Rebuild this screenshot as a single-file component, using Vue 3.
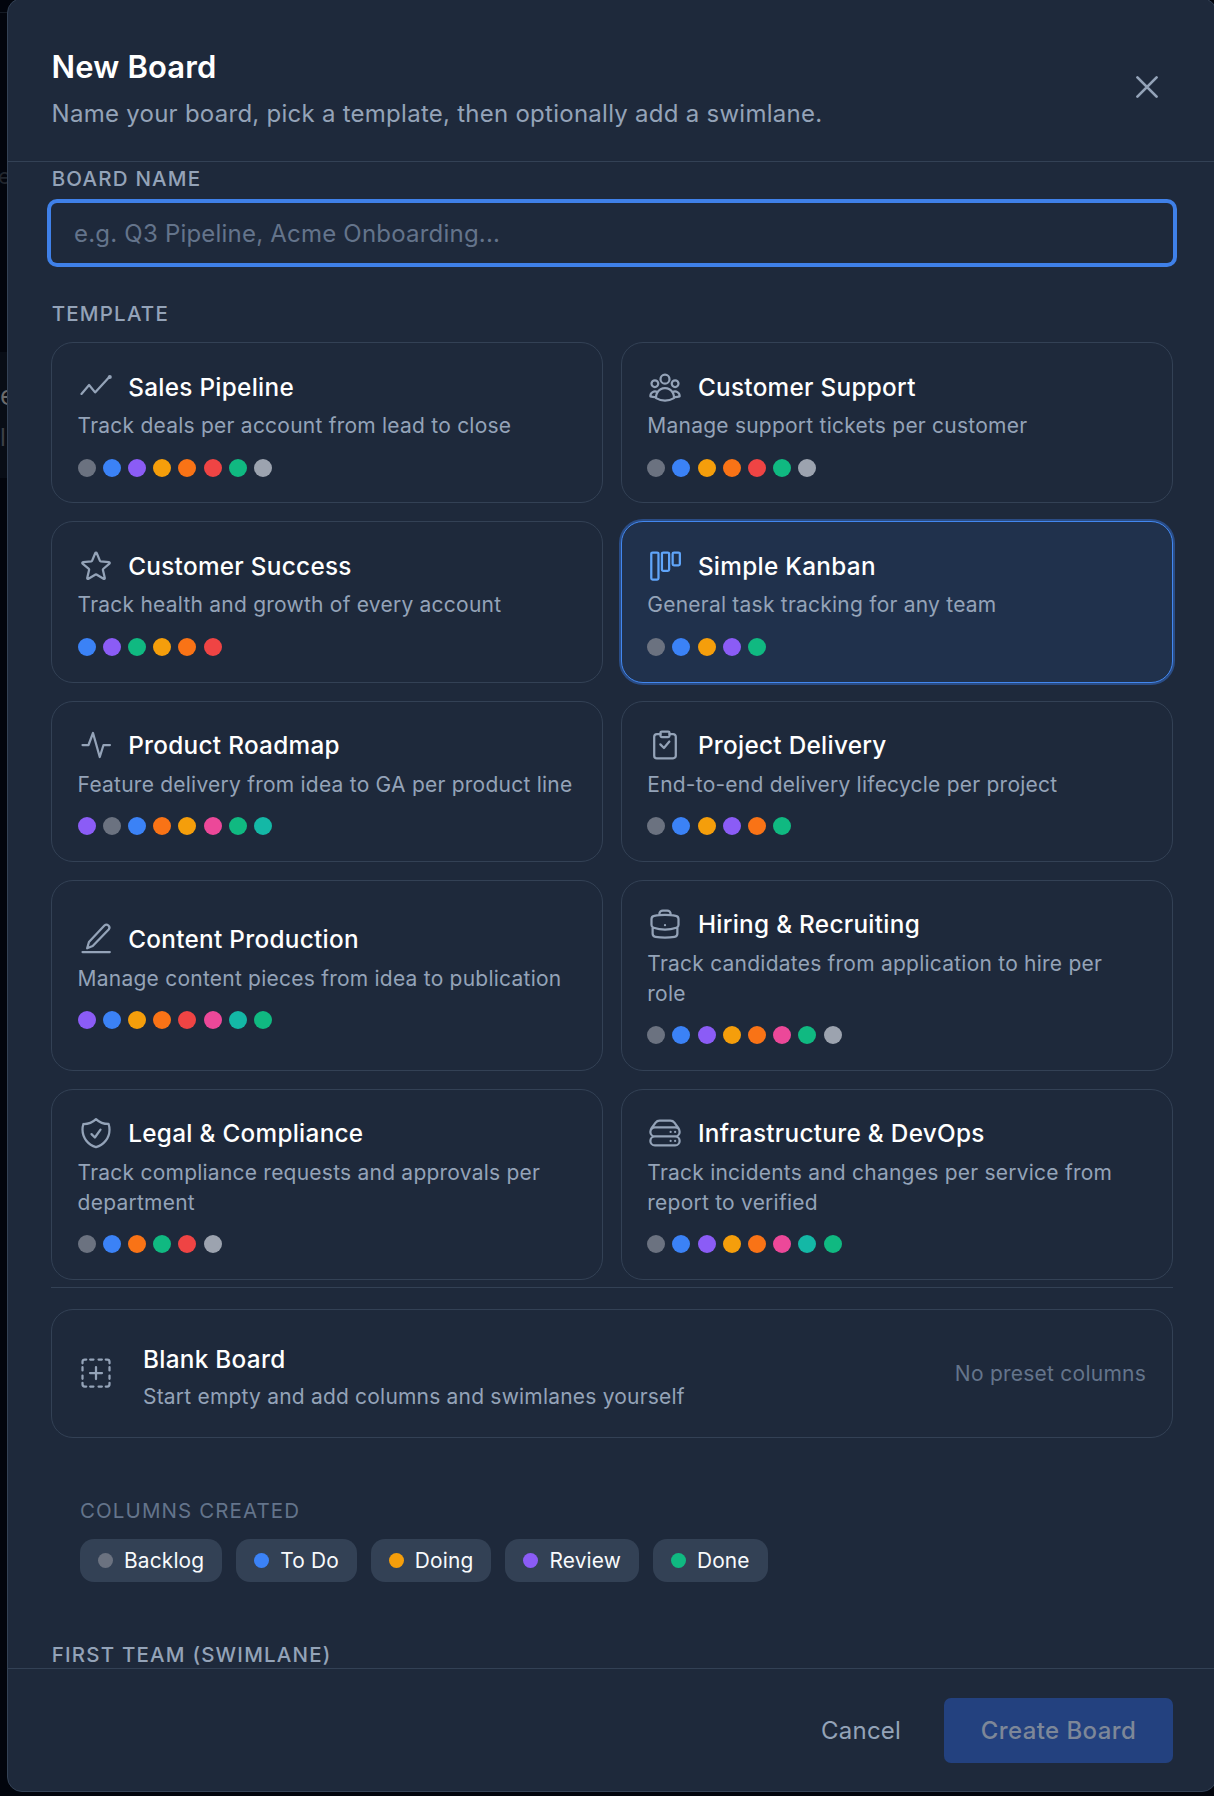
<script setup>
import { ref } from 'vue'

const colors = {
  gray: '#6b7280',
  blue: '#3b82f6',
  violet: '#8b5cf6',
  amber: '#f59e0b',
  orange: '#f97316',
  red: '#ef4444',
  green: '#10b981',
  silver: '#9ca3af',
  pink: '#ec4899',
  teal: '#14b8a6',
}

const icons = {
  trend: ['M2.3 16.6 7.4 10.7l4 4.9L21 5.2', 'M20.6 5.3a.6.6 0 1 0 1.2 0 .6.6 0 1 0-1.2 0Z'],
  group: [
    'M18 18.72a9.094 9.094 0 0 0 3.741-.479 3 3 0 0 0-4.682-2.72m.94 3.198.001.031c0 .225-.012.447-.037.666A11.944 11.944 0 0 1 12 21c-2.17 0-4.207-.576-5.963-1.584A6.062 6.062 0 0 1 6 18.719m12 0a5.971 5.971 0 0 0-.941-3.197m0 0A5.995 5.995 0 0 0 12 12.75a5.995 5.995 0 0 0-5.058 2.772m0 0a3 3 0 0 0-4.681 2.72 8.986 8.986 0 0 0 3.74.477m.94-3.197a5.971 5.971 0 0 0-.94 3.197M15 6.75a3 3 0 1 1-6 0 3 3 0 0 1 6 0Zm6 3a2.25 2.25 0 1 1-4.5 0 2.25 2.25 0 0 1 4.5 0Zm-13.5 0a2.25 2.25 0 1 1-4.5 0 2.25 2.25 0 0 1 4.5 0Z',
  ],
  star: [
    'M11.48 3.499a.562.562 0 0 1 1.04 0l2.125 5.111a.563.563 0 0 0 .475.345l5.518.442c.499.04.701.663.321.988l-4.204 3.602a.563.563 0 0 0-.182.557l1.285 5.385a.562.562 0 0 1-.84.61l-4.725-2.885a.562.562 0 0 0-.586 0L6.982 20.54a.562.562 0 0 1-.84-.61l1.285-5.386a.562.562 0 0 0-.182-.557l-4.204-3.602a.562.562 0 0 1 .321-.988l5.518-.442a.563.563 0 0 0 .475-.345L11.48 3.5Z',
  ],
  kanban: [
    'M3.75 3h3a.9.9 0 0 1 .9.9v16.2a.9.9 0 0 1-.9.9h-3a.9.9 0 0 1-.9-.9V3.9a.9.9 0 0 1 .9-.9Z',
    'M10.85 3h3a.9.9 0 0 1 .9.9v10.4a.9.9 0 0 1-.9.9h-3a.9.9 0 0 1-.9-.9V3.9a.9.9 0 0 1 .9-.9Z',
    'M18 3h3a.9.9 0 0 1 .9.9v6.8a.9.9 0 0 1-.9.9h-3a.9.9 0 0 1-.9-.9V3.9a.9.9 0 0 1 .9-.9Z',
  ],
  pulse: ['M3 12h4l3-8 4.5 16L17 12h4.3'],
  clipboard: [
    'M9 4.7H6.6a1.8 1.8 0 0 0-1.8 1.8v12.6a1.8 1.8 0 0 0 1.8 1.8h10.8a1.8 1.8 0 0 0 1.8-1.8V6.5a1.8 1.8 0 0 0-1.8-1.8H15',
    'M9.9 3h4.2a.9.9 0 0 1 .9.9v1.9a.9.9 0 0 1-.9.9H9.9a.9.9 0 0 1-.9-.9V3.9a.9.9 0 0 1 .9-.9Z',
    'M8.9 11.6 11.3 14l3.6-4.3',
  ],
  pencil: ['M6.1 18.2 7.3 14 17.6 3a1.95 1.95 0 0 1 2.85 2.65L9.8 16.7Z', 'M3 20.7h18.2'],
  briefcase: [
    'M20.25 14.15v4.25c0 1.094-.787 2.036-1.872 2.18-2.087.277-4.216.42-6.378.42s-4.291-.143-6.378-.42c-1.085-.144-1.872-1.086-1.872-2.18v-4.25m16.5 0a2.18 2.18 0 0 0 .75-1.661V8.706c0-1.081-.768-2.015-1.837-2.175a48.114 48.114 0 0 0-3.413-.387m4.5 8.006c-.194.165-.42.295-.673.38A23.978 23.978 0 0 1 12 15.75c-2.648 0-5.195-.429-7.577-1.22a2.016 2.016 0 0 1-.673-.38m0 0A2.18 2.18 0 0 1 3 12.489V8.706c0-1.081.768-2.015 1.837-2.175a48.111 48.111 0 0 1 3.413-.387m7.5 0V5.25A2.25 2.25 0 0 0 13.5 3h-3a2.25 2.25 0 0 0-2.25 2.25v.894m7.5 0a48.667 48.667 0 0 0-7.5 0M12 12.75h.008v.008H12v-.008Z',
  ],
  shield: [
    'M9 12.75 11.25 15 15 9.75m-3-7.036A11.959 11.959 0 0 1 3.598 6 11.99 11.99 0 0 0 3 9.749c0 5.592 3.824 10.29 9 11.623 5.176-1.332 9-6.03 9-11.622 0-1.31-.21-2.571-.598-3.751h-.152c-3.196 0-6.1-1.248-8.25-3.285Z',
  ],
  server: [
    'M5.25 14.25h13.5m-13.5 0a3 3 0 0 1-3-3m3 3a3 3 0 1 0 0 6h13.5a3 3 0 1 0 0-6m-16.5-3a3 3 0 0 1 3-3h13.5a3 3 0 0 1 3 3m-19.5 0a4.5 4.5 0 0 1 .9-2.7L5.737 5.1a3.375 3.375 0 0 1 2.7-1.35h7.126c1.062 0 2.062.5 2.7 1.35l2.587 3.45a4.5 4.5 0 0 1 .9 2.7m0 0a3 3 0 0 1-3 3m0 3h.008v.008h-.008v-.008Zm0-6h.008v.008h-.008v-.008Zm-3 6h.008v.008h-.008v-.008Zm0-6h.008v.008h-.008v-.008Z',
  ],
}

const templates = [
  { name: 'Sales Pipeline', icon: 'trend', desc: 'Track deals per account from lead to close', dots: ['gray', 'blue', 'violet', 'amber', 'orange', 'red', 'green', 'silver'] },
  { name: 'Customer Support', icon: 'group', desc: 'Manage support tickets per customer', dots: ['gray', 'blue', 'amber', 'orange', 'red', 'green', 'silver'] },
  { name: 'Customer Success', icon: 'star', desc: 'Track health and growth of every account', dots: ['blue', 'violet', 'green', 'amber', 'orange', 'red'] },
  { name: 'Simple Kanban', icon: 'kanban', desc: 'General task tracking for any team', dots: ['gray', 'blue', 'amber', 'violet', 'green'] },
  { name: 'Product Roadmap', icon: 'pulse', desc: 'Feature delivery from idea to GA per product line', dots: ['violet', 'gray', 'blue', 'orange', 'amber', 'pink', 'green', 'teal'] },
  { name: 'Project Delivery', icon: 'clipboard', desc: 'End-to-end delivery lifecycle per project', dots: ['gray', 'blue', 'amber', 'violet', 'orange', 'green'] },
  { name: 'Content Production', icon: 'pencil', desc: 'Manage content pieces from idea to publication', dots: ['violet', 'blue', 'amber', 'orange', 'red', 'pink', 'teal', 'green'] },
  { name: 'Hiring & Recruiting', icon: 'briefcase', desc: 'Track candidates from application to hire per role', dots: ['gray', 'blue', 'violet', 'amber', 'orange', 'pink', 'green', 'silver'] },
  { name: 'Legal & Compliance', icon: 'shield', desc: 'Track compliance requests and approvals per department', dots: ['gray', 'blue', 'orange', 'green', 'red', 'silver'] },
  { name: 'Infrastructure & DevOps', icon: 'server', desc: 'Track incidents and changes per service from report to verified', dots: ['gray', 'blue', 'violet', 'amber', 'orange', 'pink', 'teal', 'green'] },
]

const columns = [
  { name: 'Backlog', color: 'gray' },
  { name: 'To Do', color: 'blue' },
  { name: 'Doing', color: 'amber' },
  { name: 'Review', color: 'violet' },
  { name: 'Done', color: 'green' },
]

const selected = ref('Simple Kanban')
const boardName = ref('')
</script>

<template>
  <div class="backdrop">
    <div class="page-behind" aria-hidden="true">
      <div class="behind-line"></div>
      <span class="behind-text behind-nav">e</span>
      <div class="behind-band">
        <span class="behind-text behind-title">e</span>
        <span class="behind-text behind-sub">l.</span>
      </div>
    </div>

    <div class="modal" role="dialog">
      <header class="modal-header">
        <div>
          <h2>New Board</h2>
          <p>Name your board, pick a template, then optionally add a swimlane.</p>
        </div>
        <button class="close" aria-label="Close">
          <svg viewBox="0 0 24 24"><path d="M5.6 5.6l12.8 12.8M18.4 5.6L5.6 18.4" /></svg>
        </button>
      </header>

      <div class="modal-body">
        <label class="label name-label" for="board-name">BOARD NAME</label>
        <input id="board-name" v-model="boardName" class="name-input" placeholder="e.g. Q3 Pipeline, Acme Onboarding..." />

        <div class="label template-label">TEMPLATE</div>
        <div class="grid">
          <button
            v-for="t in templates"
            :key="t.name"
            class="card"
            :class="{ selected: t.name === selected }"
            @click="selected = t.name"
          >
            <span class="card-head">
              <svg class="icon" viewBox="0 0 24 24">
                <path v-for="d in icons[t.icon]" :key="d" :d="d" />
              </svg>
              <span class="card-title">{{ t.name }}</span>
            </span>
            <span class="card-desc">{{ t.desc }}</span>
            <span class="dots">
              <i v-for="c in t.dots" :key="c" class="dot" :style="{ background: colors[c] }"></i>
            </span>
          </button>
        </div>

        <div class="blank-section">
          <button class="blank">
            <svg class="icon" viewBox="0 0 24 24">
              <path d="M3 5.5v-1A1.5 1.5 0 0 1 4.5 3h1M18.5 3h1A1.5 1.5 0 0 1 21 4.5v1M21 18.5v1a1.5 1.5 0 0 1-1.5 1.5h-1M5.5 21h-1A1.5 1.5 0 0 1 3 19.5v-1" />
              <path d="M8.1 3h2.2M13.7 3h2.2M8.1 21h2.2M13.7 21h2.2M3 8.1v2.2M3 13.7v2.2M21 8.1v2.2M21 13.7v2.2" />
              <path d="M12 8v8M8 12h8" />
            </svg>
            <span class="blank-text">
              <span class="blank-title">Blank Board</span>
              <span class="blank-desc">Start empty and add columns and swimlanes yourself</span>
            </span>
            <span class="blank-note">No preset columns</span>
          </button>
        </div>

        <div class="preview">
          <div class="preview-label">COLUMNS CREATED</div>
          <div class="chips">
            <span v-for="c in columns" :key="c.name" class="chip">
              <i class="chip-dot" :style="{ background: colors[c.color] }"></i>{{ c.name }}
            </span>
          </div>
        </div>

        <div class="label team-label">FIRST TEAM (SWIMLANE)</div>
      </div>

      <footer class="modal-footer">
        <button class="cancel">Cancel</button>
        <button class="create" disabled>Create Board</button>
      </footer>
    </div>
  </div>
</template>

<style>
body {
  margin: 0;
  background: #02050d;
}
</style>

<style scoped>
.backdrop {
  position: relative;
  height: 1796px;
  overflow: hidden;
  background: #02050d;
  font-family: Inter, 'Liberation Sans', sans-serif;
}

button {
  margin: 0;
  padding: 0;
  border: 0;
  background: none;
  font: inherit;
  text-align: left;
}

/* dimmed page that shows past the dialog's left edge */
.page-behind {
  position: absolute;
  inset: 0;
}

.behind-line {
  position: absolute;
  top: 12px;
  width: 8px;
  height: 1px;
  background: #141a24;
}

.behind-text {
  position: absolute;
  line-height: 1;
}

.behind-nav {
  top: 165px;
  left: -2px;
  color: #21262e;
  font-size: 22px;
}

.behind-band {
  position: absolute;
  top: 352px;
  width: 8px;
  height: 126px;
  background: #080d16;
}

.behind-title {
  top: 31px;
  left: 0;
  color: #6b6b6d;
  font-size: 26px;
}

.behind-sub {
  top: 74px;
  left: 0;
  color: #3c4048;
  font-size: 24px;
}

.modal {
  position: relative;
  display: flex;
  flex-direction: column;
  box-sizing: border-box;
  width: 1210px;
  height: 1794px;
  margin: -2px 0 0 7px;
  border: 1px solid #334155;
  border-radius: 15px;
  background: #1e293b;
}

.modal-header {
  display: flex;
  align-items: flex-start;
  justify-content: space-between;
  box-sizing: border-box;
  height: 163px;
  padding: 46px 43px 0 43.6px;
  border-bottom: 1px solid #334155;
}

h2 {
  margin: 0;
  color: #fff;
  font-size: 31px;
  font-weight: 600;
  line-height: 44px;
  letter-spacing: 0.15px;
}

p {
  margin: 7px 0 0;
  color: #94a3b8;
  font-size: 24px;
  line-height: 36px;
  letter-spacing: 0.26px;
}

.close {
  display: flex;
  margin: 24px 8px 0 0;
}

.close svg {
  width: 36px;
  height: 36px;
  fill: none;
  stroke: #94a3b8;
  stroke-width: 1.8;
  stroke-linecap: round;
}

.modal-body {
  flex: 1;
  min-height: 0;
  padding: 0 43px;
  overflow: hidden;
}

.label {
  display: block;
  padding-left: 0.7px;
  color: #94a3b8;
  font-size: 20.5px;
  font-weight: 500;
  line-height: 30px;
  letter-spacing: 1.2px;
}

.name-label {
  margin-top: 2px;
}

.name-input {
  display: block;
  box-sizing: border-box;
  width: 1122px;
  height: 60px;
  margin-top: 9px;
  padding: 0 23px;
  border: 0;
  border-radius: 6px;
  outline: none;
  background: #1e293b;
  box-shadow: 0 0 0 4px #3f80e8;
  color: #f8fafc;
  font-family: inherit;
  font-size: 24px;
  letter-spacing: 0.21px;
}

.name-input::placeholder {
  color: #64748b;
  opacity: 1;
}

.template-label {
  margin-top: 36px;
}

.grid {
  display: grid;
  grid-template-columns: 551.7px 552.3px;
  grid-template-rows: repeat(3, 161.3px) 191px 191px;
  gap: 18px;
  width: 1122px;
  margin-top: 13px;
}

.card {
  display: flex;
  flex-direction: column;
  justify-content: center;
  padding: 0 25.6px;
  border: 1px solid #334155;
  border-radius: 22px;
}

.card.selected {
  border-color: #4287ee;
  background: #20314c;
  box-shadow: 0 0 0 2px rgba(59, 130, 246, 0.4);
}

.card-head {
  display: flex;
  align-items: center;
  gap: 14.6px;
}

.icon {
  flex: none;
  width: 36px;
  height: 36px;
  fill: none;
  stroke: #94a3b8;
  stroke-width: 1.5;
  stroke-linecap: round;
  stroke-linejoin: round;
}

.selected .icon {
  stroke: #60a5fa;
}

.card-title,
.blank-title {
  color: #fff;
  font-size: 24.3px;
  font-weight: 500;
  line-height: 36px;
  letter-spacing: 0.3px;
}

.card-desc,
.blank-desc {
  margin-top: 6.6px;
  color: #94a3b8;
  font-size: 21px;
  line-height: 30px;
  letter-spacing: 0.23px;
}

.dots {
  display: flex;
  gap: 7.2px;
  margin-top: 17.6px;
}

.dot {
  width: 18px;
  height: 18px;
  border-radius: 50%;
}

.blank-section {
  width: 1122px;
  margin-top: 7px;
  padding-top: 21px;
  border-top: 1px solid #334155;
}

.blank {
  display: flex;
  align-items: center;
  box-sizing: border-box;
  width: 100%;
  height: 129px;
  padding: 0 26px;
  border: 1px solid #334155;
  border-radius: 22px;
}

.blank-text {
  display: flex;
  flex: 1;
  flex-direction: column;
  padding-top: 7px;
  margin-left: 29px;
}

.blank-desc {
  margin-top: 5px;
  letter-spacing: 0.2px;
}

.blank-note {
  color: #64748b;
  font-size: 21px;
  letter-spacing: 0.24px;
}

.preview {
  padding: 58px 29px 0;
}

.preview-label {
  color: #64748b;
  font-size: 20.5px;
  line-height: 30px;
  letter-spacing: 1.1px;
}

.chips {
  display: flex;
  gap: 14px;
  margin-top: 13px;
}

.chip {
  display: flex;
  align-items: center;
  height: 43px;
  padding: 0 18px;
  border-radius: 14px;
  background: #334155;
  color: #f8fafc;
  font-size: 20.9px;
  letter-spacing: 0.15px;
}

.chip-dot {
  width: 15px;
  height: 15px;
  margin-right: 11px;
  border-radius: 50%;
}

.team-label {
  margin-top: 58px;
}

.modal-footer {
  display: flex;
  align-items: center;
  justify-content: flex-end;
  box-sizing: border-box;
  height: 123px;
  padding: 1px 43px 0;
  border-top: 1px solid #334155;
}

.cancel {
  margin-right: 43px;
  color: #94a3b8;
  font-size: 24px;
  letter-spacing: 0.2px;
}

.create {
  width: 229px;
  height: 65px;
  border-radius: 7px;
  background: #23417f;
  color: #7d8798;
  font-size: 24px;
  font-weight: 500;
  letter-spacing: 0.4px;
  text-align: center;
}
</style>
